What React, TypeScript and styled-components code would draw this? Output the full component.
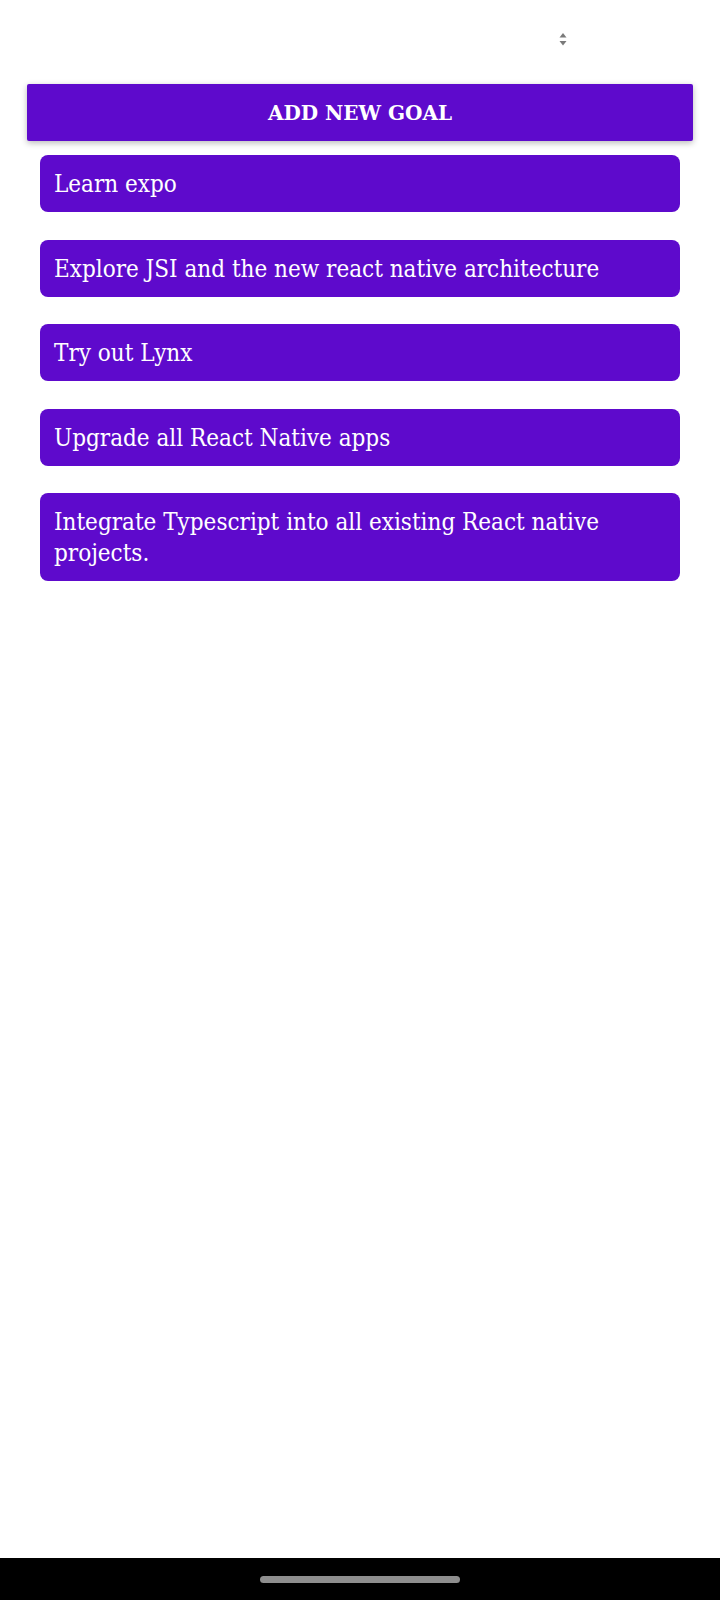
import React from "react";
import styled, { createGlobalStyle } from "styled-components";

const GlobalStyle = createGlobalStyle`
  html, body {
    margin: 0;
    padding: 0;
    background: #ffffff;
  }
  #root {
    min-height: 1600px;
  }
`;

const Screen = styled.div`
  width: 720px;
  height: 1600px;
  display: flex;
  flex-direction: column;
  background: #ffffff;
  font-family: "DejaVu Serif Condensed", "DejaVu Serif", "Liberation Serif", serif;
`;

const Content = styled.main`
  flex: 1;
  display: flex;
  flex-direction: column;
  padding: 33px 27px 0 27px;
`;

const SortRow = styled.div`
  display: flex;
  justify-content: flex-end;
  align-items: flex-start;
  padding-right: 126px;
  height: 51px;
`;

const AddButton = styled.button`
  height: 57px;
  border: none;
  border-radius: 2px;
  background: #5e0acc;
  color: #ffffff;
  font-family: "DejaVu Serif", "Liberation Serif", serif;
  font-size: 20px;
  font-weight: 600;
  letter-spacing: 0;
  padding: 1px 0 0 0;
  box-shadow: 0 2px 6px rgba(0, 0, 0, 0.28);
  cursor: pointer;
`;

const GoalList = styled.ul`
  list-style: none;
  margin: 14px 13px 0 13px;
  padding: 0;
  display: flex;
  flex-direction: column;
  gap: 27.5px;
`;

const GoalItem = styled.li`
  background: #5e0acc;
  color: #ffffff;
  border-radius: 8px;
  padding: 14px 14px 12px 14px;
  font-size: 24px;
  line-height: 31px;
`;

const NavBar = styled.div`
  height: 42px;
  background: #000000;
  display: flex;
  align-items: center;
  justify-content: center;
`;

const NavHandle = styled.div`
  width: 200px;
  height: 7px;
  border-radius: 4px;
  background: #8e8e8e;
`;

const SortIcon = () => (
  <svg width="8" height="14" viewBox="0 0 8 14" aria-hidden="true">
    <path d="M4 0 L7.5 4.5 L0.5 4.5 Z" fill="#7a7a7a" />
    <path d="M0.5 8 L7.5 8 L4 12.5 Z" fill="#7a7a7a" />
  </svg>
);

const goals = [
  "Learn expo",
  "Explore JSI and the new react native architecture",
  "Try out Lynx",
  "Upgrade all React Native apps",
  "Integrate Typescript into all existing React native projects.",
];

export default function App() {
  return (
    <>
      <GlobalStyle />
      <Screen>
        <Content>
          <SortRow>
            <SortIcon />
          </SortRow>
          <AddButton>ADD NEW GOAL</AddButton>
          <GoalList>
            {goals.map((g) => (
              <GoalItem key={g}>{g}</GoalItem>
            ))}
          </GoalList>
        </Content>
        <NavBar>
          <NavHandle />
        </NavBar>
      </Screen>
    </>
  );
}
